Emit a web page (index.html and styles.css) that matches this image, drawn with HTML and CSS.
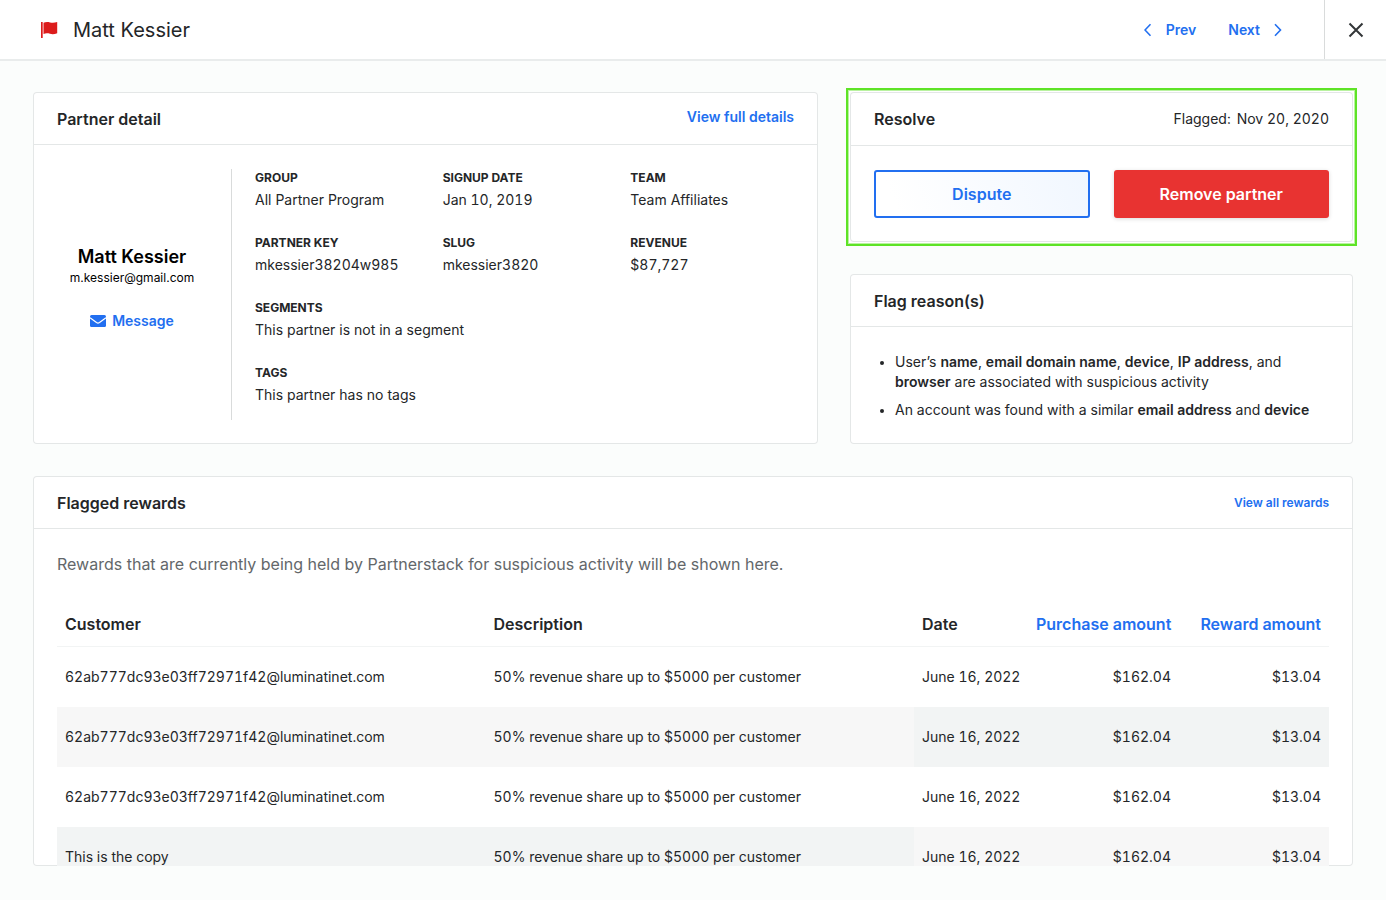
FILE: index.html
```html
<!DOCTYPE html>
<html lang="en">
<head>
<meta charset="utf-8">
<meta name="viewport" content="width=device-width, initial-scale=1">
<title>Matt Kessier</title>
<link rel="stylesheet" href="styles.css">
</head>
<body>
<div class="page">
  <header class="topbar">
    <svg class="flag" width="18" height="18" viewBox="0 0 18 18" aria-hidden="true">
      <path d="M1 1h1.700v16H1zM3.500 1.700C5.500.8 8 .8 10 1.400c2.500.7 4.500.5 7.200-.4v11.300c-2.700 1-5.200 1.100-7.200.500-2.500-.7-4.500-.6-6.500.2z" fill="#dc1c1c"/>
    </svg>
    <h1 class="page-title">Matt Kessier</h1>
    <nav class="pager">
      <a class="pager-link" href="#prev">
        <svg width="8" height="14" viewBox="0 0 8 14" aria-hidden="true"><path d="M6.500 1.200 1 7l5.500 5.800" fill="none" stroke="currentColor" stroke-width="1.600"/></svg>
        Prev
      </a>
      <a class="pager-link" href="#next">
        Next
        <svg width="8" height="14" viewBox="0 0 8 14" aria-hidden="true"><path d="M1 1.200 6.500 7 1 12.800" fill="none" stroke="currentColor" stroke-width="1.600"/></svg>
      </a>
    </nav>
    <button class="close" type="button" aria-label="Close">
      <svg width="16" height="16" viewBox="0 0 16 16" aria-hidden="true"><path d="M1.500 1.500l13 13M14.500 1.500l-13 13" stroke="currentColor" stroke-width="2"/></svg>
    </button>
  </header>

  <main class="content">
    <div class="overview">
      <section class="card">
        <div class="card-head">
          <h2 class="card-title">Partner detail</h2>
          <a class="link" href="#details">View full details</a>
        </div>
        <div class="partner">
          <div class="profile">
            <div class="profile-name">Matt Kessier</div>
            <div class="profile-email">m.kessier@gmail.com</div>
            <a class="message" href="#message">
              <svg width="16" height="12" viewBox="0 0 16 12" aria-hidden="true">
                <rect width="16" height="12" rx="1.500" fill="currentColor"/>
                <path d="M0 2.800 6.500 7.600Q8 8.600 9.500 7.600L16 2.800" fill="none" stroke="#fff" stroke-width="1.200"/>
              </svg>
              Message
            </a>
          </div>
          <dl class="facts">
            <div><dt>GROUP</dt><dd>All Partner Program</dd></div>
            <div><dt>SIGNUP DATE</dt><dd class="figures">Jan 10, 2019</dd></div>
            <div><dt>TEAM</dt><dd>Team Affiliates</dd></div>
            <div><dt>PARTNER KEY</dt><dd class="figures">mkessier38204w985</dd></div>
            <div><dt>SLUG</dt><dd class="figures">mkessier3820</dd></div>
            <div><dt>REVENUE</dt><dd class="figures">$87,727</dd></div>
            <div class="wide"><dt>SEGMENTS</dt><dd>This partner is not in a segment</dd></div>
            <div class="wide"><dt>TAGS</dt><dd>This partner has no tags</dd></div>
          </dl>
        </div>
      </section>

      <div class="side">
        <div class="highlight">
          <section class="card">
            <div class="card-head">
              <h2 class="card-title">Resolve</h2>
              <p class="flagged figures"><span>Flagged:</span> <span>Nov 20, 2020</span></p>
            </div>
            <div class="actions">
              <button class="btn btn-outline" type="button">Dispute</button>
              <button class="btn btn-danger" type="button">Remove partner</button>
            </div>
          </section>
        </div>
        <section class="card reasons-card">
          <div class="card-head">
            <h2 class="card-title">Flag reason(s)</h2>
          </div>
          <ul class="reasons">
            <li>User’s <b>name</b>, <b>email domain name</b>, <b>device</b>, <b>IP address</b>, and <b>browser</b> are associated with suspicious activity</li>
            <li>An account was found with a similar <b>email address</b> and <b>device</b></li>
          </ul>
        </section>
      </div>
    </div>

    <section class="card rewards">
      <div class="card-head">
        <h2 class="card-title">Flagged rewards</h2>
        <a class="link link-small" href="#rewards">View all rewards</a>
      </div>
      <div class="rewards-body">
        <p class="intro">Rewards that are currently being held by Partnerstack for suspicious activity will be shown here.</p>
        <table class="table">
          <thead>
            <tr><th>Customer</th><th>Description</th><th class="col-date">Date</th><th class="col-purchase sortable">Purchase amount</th><th class="col-reward sortable">Reward amount</th></tr>
          </thead>
          <tbody class="figures">
            <tr><td>62ab777dc93e03ff72971f42@luminatinet.com</td><td>50% revenue share up to $5000 per customer</td><td>June 16, 2022</td><td class="num">$162.04</td><td class="num">$13.04</td></tr>
            <tr><td class="neutral">62ab777dc93e03ff72971f42@luminatinet.com</td><td class="neutral">50% revenue share up to $5000 per customer</td><td class="tint">June 16, 2022</td><td class="num tint">$162.04</td><td class="num tint">$13.04</td></tr>
            <tr><td>62ab777dc93e03ff72971f42@luminatinet.com</td><td>50% revenue share up to $5000 per customer</td><td>June 16, 2022</td><td class="num">$162.04</td><td class="num">$13.04</td></tr>
            <tr><td class="tint">This is the copy</td><td class="tint">50% revenue share up to $5000 per customer</td><td class="neutral">June 16, 2022</td><td class="num neutral">$162.04</td><td class="num neutral">$13.04</td></tr>
          </tbody>
        </table>
      </div>
    </section>
  </main>
</div>
</body>
</html>
```
FILE: styles.css
```css
* {
  box-sizing: border-box;
}

body {
  margin: 0;
  background: #fbfdfc;
  color: #242628;
  font-family: Inter, "Liberation Sans", sans-serif;
  font-size: 14px;
  line-height: 20px;
}

h1, h2, p, dl, dd, ul {
  margin: 0;
}

a {
  color: #226ff0;
  font-weight: 600;
  text-decoration: none;
}

button {
  font-family: inherit;
  cursor: pointer;
}

svg {
  flex: none;
}

.figures {
  font-variant-numeric: tabular-nums;
}

.page {
  display: flex;
  flex-direction: column;
  height: 100vh;
}

.topbar {
  display: flex;
  flex: none;
  align-items: center;
  height: 61px;
  padding-left: 40px;
  background: #fff;
  border-bottom: 2px solid #e9ecec;
}

.page-title {
  flex: 1;
  margin-left: 15px;
  font-size: 20px;
  font-weight: 400;
  line-height: 28px;
}

.pager {
  display: flex;
  gap: 32px;
  margin-right: 42px;
}

.pager-link {
  display: flex;
  align-items: center;
  gap: 14px;
}

.close {
  display: flex;
  align-items: center;
  justify-content: center;
  align-self: stretch;
  width: 62px;
  padding: 0;
  border: 0;
  border-left: 1px solid #d9dbdb;
  background: none;
  color: #333638;
}

.content {
  display: flex;
  flex: 1;
  flex-direction: column;
  gap: 32px;
  min-height: 0;
  padding: 31px 33px 34px;
}

.overview {
  display: grid;
  flex: none;
  grid-template-columns: 785fr 503fr;
  gap: 32px;
}

.card {
  overflow: hidden;
  border-radius: 4px;
  background: #fff;
  box-shadow: inset 0 0 0 1px #e4e7e7;
}

.card-head {
  display: flex;
  align-items: flex-start;
  justify-content: space-between;
  height: 53px;
  padding: 15px 24px 0;
  border-bottom: 1px solid #e4e7e7;
}

.card-title {
  font-size: 16px;
  font-weight: 600;
  line-height: 24px;
}

.link-small {
  font-size: 12px;
  line-height: 24px;
}

.partner {
  display: flex;
  padding: 24px 24px 24px 0;
}

.profile {
  display: flex;
  flex: none;
  flex-direction: column;
  align-items: center;
  justify-content: center;
  width: 199px;
  min-height: 251px;
  padding-bottom: 14px;
  border-right: 1px solid #d9dbdb;
  color: #000;
}

.profile-name {
  font-size: 18px;
  font-weight: 600;
  line-height: 24px;
}

.profile-email {
  font-size: 12px;
  line-height: 18px;
}

.message {
  display: flex;
  align-items: center;
  gap: 6px;
  margin-top: 24px;
}

.facts {
  display: grid;
  flex: 1;
  grid-template-columns: repeat(3, 1fr);
  align-content: start;
  gap: 24px;
  padding-left: 23px;
}

.facts dt {
  margin-bottom: 4px;
  font-size: 12px;
  font-weight: 700;
  line-height: 17px;
}

.facts .wide {
  grid-column: 1 / -1;
}

.side {
  display: flex;
  flex-direction: column;
  gap: 32px;
}

.highlight {
  outline: 2px solid #5ee326;
  outline-offset: 2px;
  box-shadow: 0 0 0 1px #fff, 0 0 0 2px #b9f2a0;
}

.highlight .card-head {
  height: 54px;
}

.flagged {
  display: flex;
  gap: 6px;
  line-height: 24px;
}

.actions {
  display: grid;
  grid-template-columns: 1fr 1fr;
  gap: 24px;
  padding: 24px;
}

.btn {
  height: 48px;
  border: 0;
  border-radius: 3px;
  font-size: 16px;
  font-weight: 600;
}

.btn-outline {
  border: 2px solid #226ff0;
  background: linear-gradient(70deg, #fff 10%, #f1f7ff);
  color: #226ff0;
}

.btn-danger {
  background: #e83331;
  box-shadow: 0 1px 4px rgba(0, 0, 0, 0.15);
  color: #fff;
}

.reasons-card {
  flex: 1;
}

.reasons {
  display: grid;
  gap: 8px;
  padding: 25px 24px 24px 45px;
}

.reasons li::marker {
  font-size: 12px;
}

.reasons b {
  font-weight: 600;
}

.rewards {
  flex: 1;
  min-height: 0;
}

.rewards-body {
  padding: 23px 24px;
}

.intro {
  color: #63676a;
  font-size: 16px;
  line-height: 24px;
}

.table {
  width: 100%;
  margin-top: 26px;
  border-collapse: separate;
  border-spacing: 0;
  table-layout: fixed;
  white-space: nowrap;
}

.table th {
  height: 45px;
  padding: 0 8px;
  border-bottom: 1px solid #f2f4f4;
  font-size: 16px;
  font-weight: 600;
  text-align: left;
}

.table td {
  height: 60px;
  padding: 0 8px;
}

.table .col-date {
  width: 114px;
}

.table .col-purchase {
  width: 151px;
  text-align: right;
}

.table .col-reward {
  width: 150px;
  text-align: right;
}

.table .sortable {
  color: #226ff0;
}

.table .num {
  text-align: right;
}

.table .neutral {
  background: #f7f7f7;
}

.table .tint {
  background: #f2f4f4;
}
```
